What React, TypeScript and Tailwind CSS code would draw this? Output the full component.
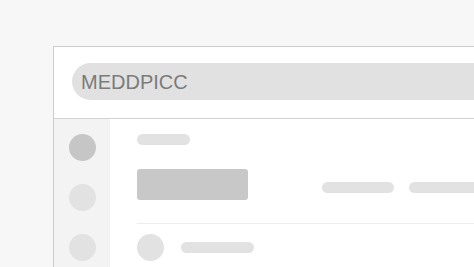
import React from 'react';

const Bar: React.FC<{ className?: string }> = ({ className = '' }) => (
  <div className={`h-[11px] rounded-full bg-[#e2e2e2] ${className}`} />
);

const App: React.FC = () => {
  return (
    <div className="h-[267px] w-[474px] overflow-hidden bg-[#f7f7f7] pl-[53px] pt-[46px]" style={{ fontFamily: '"Liberation Sans", Arial, sans-serif' }}>
      <div className="w-[600px] border-l border-t border-[#cdcdcd] bg-white">
        {/* header with search */}
        <div className="h-[72px] border-b border-[#d2d2d2] pl-[18px] pt-[16px]">
          <div className="flex h-[37px] items-center rounded-l-full bg-[#e1e1e1] pl-[9px]">
            <span className="text-[20px] text-[#7b7b7b]">MEDDPICC</span>
          </div>
        </div>

        <div className="flex h-[200px]">
          {/* sidebar */}
          <div className="flex w-[56px] flex-col items-center gap-[23px] bg-[#f3f3f3] pt-[15px]">
            <div className="h-[27px] w-[27px] rounded-full bg-[#c6c6c6]" />
            <div className="h-[27px] w-[27px] rounded-full bg-[#e2e2e2]" />
            <div className="h-[27px] w-[27px] rounded-full bg-[#e2e2e2]" />
          </div>

          {/* content */}
          <div className="flex-1 pl-[27px] pt-[15px]">
            <Bar className="w-[53px]" />
            <div className="mt-[24px] flex items-center border-b border-[#ececec] pb-[23px]">
              <div className="h-[31px] w-[111px] rounded-[3px] bg-[#c8c8c8]" />
              <div className="ml-[74px] mt-[6px] flex gap-[15px]">
                <Bar className="w-[72px]" />
                <Bar className="w-[120px]" />
              </div>
            </div>
            <div className="mt-[10px] flex items-center gap-[17px]">
              <div className="h-[27px] w-[27px] rounded-full bg-[#e2e2e2]" />
              <Bar className="w-[73px]" />
            </div>
          </div>
        </div>
      </div>
    </div>
  );
};

export default App;
